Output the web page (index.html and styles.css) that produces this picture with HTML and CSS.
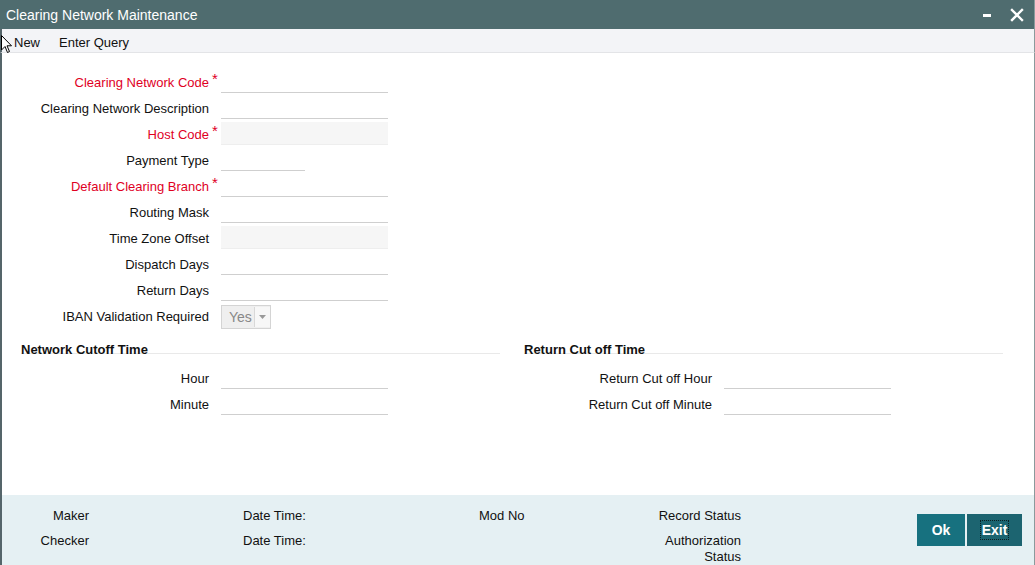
FILE: index.html
```html
<!DOCTYPE html>
<html>
<head>
<meta charset="utf-8">
<title>Clearing Network Maintenance</title>
<link rel="stylesheet" href="styles.css">
</head>
<body>
<div class="window">
  <div class="titlebar">
    <span class="title">Clearing Network Maintenance</span>
    <div class="win-controls">
      <svg class="ico-min" width="10" height="6" viewBox="0 0 10 6"><rect x="1" y="1" width="8" height="3" fill="#fff"/></svg>
      <svg class="ico-close" width="14" height="14" viewBox="0 0 14 14"><path d="M2 2 L12 12 M12 2 L2 12" stroke="#fff" stroke-width="2.4" stroke-linecap="square"/></svg>
    </div>
  </div>
  <div class="toolbar">
    <span class="tool">New</span>
    <span class="tool">Enter Query</span>
    <svg class="cursor" width="12" height="20" viewBox="0 0 12 20"><path d="M0.5 0.5 L0.5 15 L4 11.5 L6.5 17.5 L8.5 16.5 L6 10.8 L10.5 10.8 Z" fill="#fff" stroke="#000" stroke-width="1"/></svg>
  </div>
  <div class="body">
    <div class="form">
      <div class="row"><label class="lbl req">Clearing Network Code</label><span class="ast">*</span><span class="inp"></span></div>
      <div class="row"><label class="lbl">Clearing Network Description</label><span class="ast"></span><span class="inp"></span></div>
      <div class="row"><label class="lbl req">Host Code</label><span class="ast">*</span><span class="inp ro"></span></div>
      <div class="row"><label class="lbl">Payment Type</label><span class="ast"></span><span class="inp short"></span></div>
      <div class="row"><label class="lbl req">Default Clearing Branch</label><span class="ast">*</span><span class="inp"></span></div>
      <div class="row"><label class="lbl">Routing Mask</label><span class="ast"></span><span class="inp"></span></div>
      <div class="row"><label class="lbl">Time Zone Offset</label><span class="ast"></span><span class="inp ro"></span></div>
      <div class="row"><label class="lbl">Dispatch Days</label><span class="ast"></span><span class="inp"></span></div>
      <div class="row"><label class="lbl">Return Days</label><span class="ast"></span><span class="inp"></span></div>
      <div class="row"><label class="lbl">IBAN Validation Required</label><span class="ast"></span>
        <span class="select"><span class="sel-val">Yes</span><span class="sel-arrow"><svg width="7" height="4" viewBox="0 0 7 4"><path d="M0 0 L7 0 L3.5 4 Z" fill="#999"/></svg></span></span>
      </div>
    </div>
    <div class="sections">
      <div class="section">
        <div class="sec-head">Network Cutoff Time</div>
        <div class="srow"><label class="slbl">Hour</label><span class="inp"></span></div>
        <div class="srow"><label class="slbl">Minute</label><span class="inp"></span></div>
      </div>
      <div class="section">
        <div class="sec-head">Return Cut off Time</div>
        <div class="srow"><label class="slbl">Return Cut off Hour</label><span class="inp"></span></div>
        <div class="srow"><label class="slbl">Return Cut off Minute</label><span class="inp"></span></div>
      </div>
    </div>
  </div>
  <div class="footer">
    <div class="fcol c1"><span>Maker</span><span>Checker</span></div>
    <div class="fcol c2"><span>Date Time:</span><span>Date Time:</span></div>
    <div class="fcol c3"><span>Mod No</span></div>
    <div class="fcol c4"><span>Record Status</span><span>Authorization Status</span></div>
    <div class="buttons">
      <button class="btn ok">Ok</button>
      <button class="btn exit"><span class="focus">Exit</span></button>
    </div>
  </div>
</div>
</body>
</html>
```
FILE: styles.css
```css
* { box-sizing: border-box; }
html, body { margin: 0; padding: 0; }
body {
  font-family: "Liberation Sans", Arial, sans-serif;
  font-size: 13px;
  color: #111;
  background: #fff;
}
.window {
  width: 1035px;
  height: 565px;
  display: flex;
  flex-direction: column;
  position: relative;
  overflow: hidden;
}
.titlebar {
  height: 29px;
  background: #4f6c6f;
  color: #fff;
  display: flex;
  align-items: center;
  justify-content: space-between;
  padding-left: 6px;
  padding-right: 10px;
  border-right: 1px solid #8a9a9c;
}
.title { font-size: 14px; }
.win-controls { display: flex; align-items: center; gap: 18px; }
.ico-min { margin-top: 3px; }
.toolbar {
  height: 24px;
  background: #f3f4f7;
  border-bottom: 1px solid #e3e4e7;
  border-left: 2px solid #55656a;
  border-right: 1px solid #8a9a9c;
  display: flex;
  align-items: center;
  padding-left: 12px;
  padding-top: 3px;
  gap: 19px;
  position: relative;
}
.cursor { position: absolute; left: -1px; top: 6px; }
.body {
  flex: 1;
  border-left: 2px solid #55656a;
  border-right: 1px solid #8a9a9c;
  padding-top: 17px;
}
.row {
  display: grid;
  grid-template-columns: 207px 12px auto;
  height: 26px;
  align-items: start;
}
.lbl {
  text-align: right;
  line-height: 25px;
  white-space: nowrap;
}
.req { color: #e0001f; }
.ast {
  color: #e0001f;
  font-size: 15px;
  line-height: 18px;
  padding-left: 3px;
}
.inp {
  display: block;
  width: 167px;
  height: 23px;
  border-bottom: 1px solid #cfcfcf;
}
.inp.ro { background: #f6f6f6; border-bottom-color: #eeeeee; }
.inp.short { width: 84px; }
.select {
  margin-top: 1px;
  width: 50px;
  height: 24px;
  border: 1px solid #d4d4d4;
  background: #efefef;
  display: flex;
}
.sel-val {
  flex: 1;
  color: #888;
  font-size: 14px;
  line-height: 23px;
  padding-left: 7px;
}
.sel-arrow {
  width: 16px;
  border-left: 1px solid #d8d8d8;
  background: #f7f7f7;
  display: flex;
  align-items: center;
  justify-content: center;
  margin: 1px 0;
}
.sections {
  display: flex;
  gap: 24px;
  padding-left: 19px;
  margin-top: 13px;
}
.section { width: 479px; }
.sec-head {
  font-weight: bold;
  height: 11px;
  line-height: 14px;
  border-bottom: 1px solid #e9e9e9;
  margin-bottom: 12px;
  white-space: nowrap;
}
.srow {
  display: grid;
  grid-template-columns: 188px auto;
  column-gap: 12px;
  height: 26px;
  align-items: start;
}
.slbl { text-align: right; line-height: 25px; white-space: nowrap; }
.footer {
  height: 70px;
  background: #e5f0f3;
  border-left: 2px solid #55656a;
  border-right: 1px solid #8a9a9c;
  display: flex;
  padding-top: 13px;
}
.fcol {
  display: flex;
  flex-direction: column;
  gap: 9px;
  line-height: 16px;
}
.c1 { width: 87px; text-align: right; }
.c2 { width: 236px; margin-left: 154px; }
.c3 { width: 177px; }
.c4 { width: 85px; text-align: right; }
.buttons {
  display: flex;
  gap: 2px;
  margin-left: 176px;
  margin-top: 6px;
  align-items: flex-start;
}
.btn {
  height: 32px;
  border: none;
  color: #fff;
  font-family: "Liberation Sans", Arial, sans-serif;
  font-size: 14px;
  font-weight: bold;
  padding: 0;
}
.ok { width: 48px; background: #17717f; }
.exit { width: 55px; background: #1c6470; }
.focus { border: 1px dotted #0b1f22; padding: 1px 1px; }
```
